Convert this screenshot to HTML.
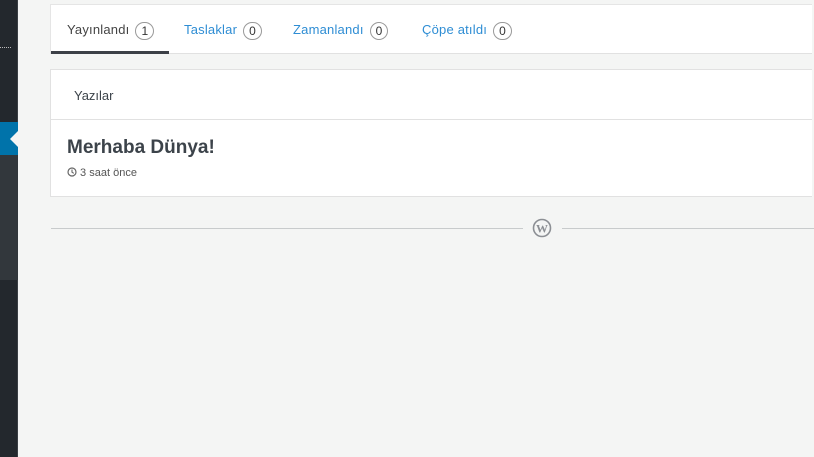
<!DOCTYPE html>
<html><head><meta charset="utf-8"><style>
*{margin:0;padding:0;box-sizing:border-box}
body{width:814px;height:457px;background:#f4f5f4;font-family:"Liberation Sans",sans-serif;position:relative;overflow:hidden}
.sb{position:absolute;left:0;top:0;width:18px;height:457px;background:#23282d;border-right:1px solid #3a3f44}
.sb .dot{position:absolute;left:0;top:47px;width:11px;border-top:1px dotted #bbb}
.sb .act{position:absolute;left:0;top:122px;width:18px;height:33px;background:#0073aa}
.sb .notch{position:absolute;left:10px;top:131px;width:0;height:0;border-top:8px solid transparent;border-bottom:8px solid transparent;border-right:8px solid #f4f5f4}
.sb .sub{position:absolute;left:0;top:155px;width:18px;height:125px;background:#32373c}
.tabs{position:absolute;left:50px;top:4px;width:762px;height:50px;background:#fff;border-top:1px solid #e5e5e5;border-bottom:1px solid #e1e1e1;border-left:1px solid #e5e5e5}
.tab{position:absolute;top:17px;font-size:13px;color:#2e8dd4;letter-spacing:0.2px}
.tab .c{display:inline-block;border:1px solid #999;border-radius:9px;font-size:12px;color:#333;padding:0 5px;height:18px;line-height:16px;margin-left:6px;vertical-align:-1px;letter-spacing:0}
.tab.on{color:#444}
.ul{position:absolute;left:0;top:46px;width:118px;height:3px;background:#3c4047}
.card{position:absolute;left:50px;top:69px;width:762px;height:128px;background:#fff;border:1px solid #e1e1e1;border-right:none}
.hd{position:absolute;left:23px;top:18px;font-size:13px;color:#3c434a}
.div{position:absolute;left:0;top:49px;width:100%;border-top:1px solid #e1e1e1}
.tt{position:absolute;left:16px;top:67px;font-size:19px;font-weight:bold;color:#3c434a}
.meta{position:absolute;left:16px;top:97px;font-size:11px;color:#555}
.fl{position:absolute;top:228px;border-top:1px solid #c8cbcc}
</style></head><body>
<div class="sb"><div class="dot"></div><div class="act"></div><div class="sub"></div></div>
<div class="sb" style="background:none;border:none"><div class="notch"></div></div>
<div class="tabs">
<div class="tab on" style="left:16px">Yayınlandı<span class="c">1</span></div>
<div class="tab" style="left:133px">Taslaklar<span class="c">0</span></div>
<div class="tab" style="left:242px">Zamanlandı<span class="c">0</span></div>
<div class="tab" style="left:371px">Çöpe atıldı<span class="c">0</span></div>
<div class="ul"></div>
</div>
<div class="card">
<div class="hd">Yazılar</div>
<div class="div"></div>
<div class="tt">Merhaba Dünya!</div>
<div class="meta"><svg width="10" height="10" viewBox="0 0 10 10" style="vertical-align:-1px"><circle cx="5" cy="5" r="4" fill="none" stroke="#666" stroke-width="1.2"/><path d="M5 2.5V5.2L6.8 6.3" fill="none" stroke="#666" stroke-width="1.1"/></svg> 3 saat önce</div>
</div>
<div class="fl" style="left:51px;width:472px"></div>
<div class="fl" style="left:562px;width:252px"></div>
<svg style="position:absolute;left:532px;top:218px" width="20" height="20" viewBox="0 0 20 20"><circle cx="10" cy="10" r="8.5" fill="none" stroke="#8c8f94" stroke-width="1.6"/><text x="10" y="14.5" text-anchor="middle" font-family="Liberation Serif,serif" font-weight="bold" font-size="12" fill="#8c8f94">W</text></svg>
</body></html>
